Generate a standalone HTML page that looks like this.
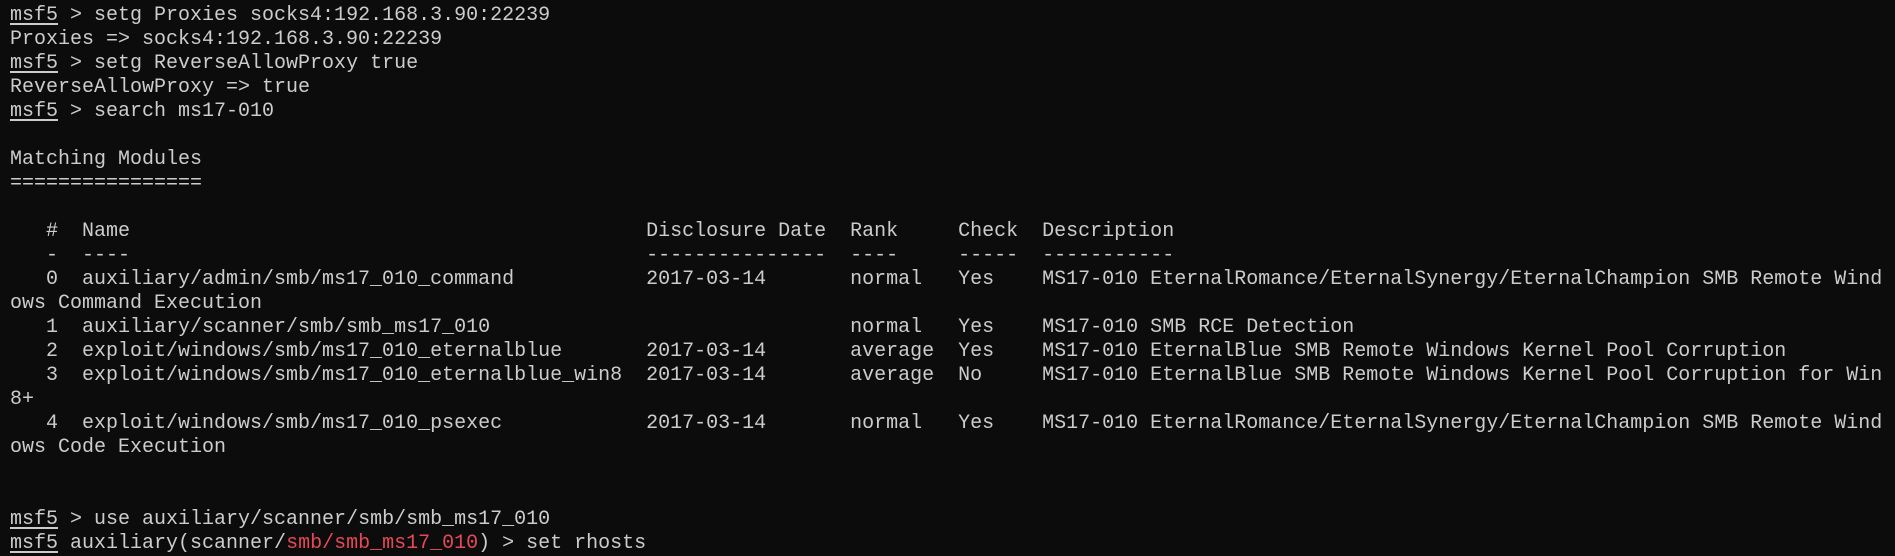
<!DOCTYPE html>
<html><head><meta charset="utf-8"><style>
html,body{margin:0;padding:0;background:#0c0c0c;width:1895px;height:537px;overflow:hidden}
pre{margin:0;position:absolute;left:10px;top:4px;font-family:"Liberation Mono",monospace;font-size:20px;line-height:24px;color:#cccccc;white-space:pre}
u{text-decoration:underline;text-underline-offset:3px}
.r{color:#e74856}
</style></head><body><pre><u>msf5</u> &gt; setg Proxies socks4:192.168.3.90:22239
Proxies =&gt; socks4:192.168.3.90:22239
<u>msf5</u> &gt; setg ReverseAllowProxy true
ReverseAllowProxy =&gt; true
<u>msf5</u> &gt; search ms17-010

Matching Modules
================

   #  Name                                           Disclosure Date  Rank     Check  Description
   -  ----                                           ---------------  ----     -----  -----------
   0  auxiliary/admin/smb/ms17_010_command           2017-03-14       normal   Yes    MS17-010 EternalRomance/EternalSynergy/EternalChampion SMB Remote Wind
ows Command Execution
   1  auxiliary/scanner/smb/smb_ms17_010                              normal   Yes    MS17-010 SMB RCE Detection
   2  exploit/windows/smb/ms17_010_eternalblue       2017-03-14       average  Yes    MS17-010 EternalBlue SMB Remote Windows Kernel Pool Corruption
   3  exploit/windows/smb/ms17_010_eternalblue_win8  2017-03-14       average  No     MS17-010 EternalBlue SMB Remote Windows Kernel Pool Corruption for Win
8+
   4  exploit/windows/smb/ms17_010_psexec            2017-03-14       normal   Yes    MS17-010 EternalRomance/EternalSynergy/EternalChampion SMB Remote Wind
ows Code Execution


<u>msf5</u> &gt; use auxiliary/scanner/smb/smb_ms17_010
<u>msf5</u> auxiliary(scanner/<span class="r">smb/smb_ms17_010</span>) &gt; set rhosts
</pre></body></html>
